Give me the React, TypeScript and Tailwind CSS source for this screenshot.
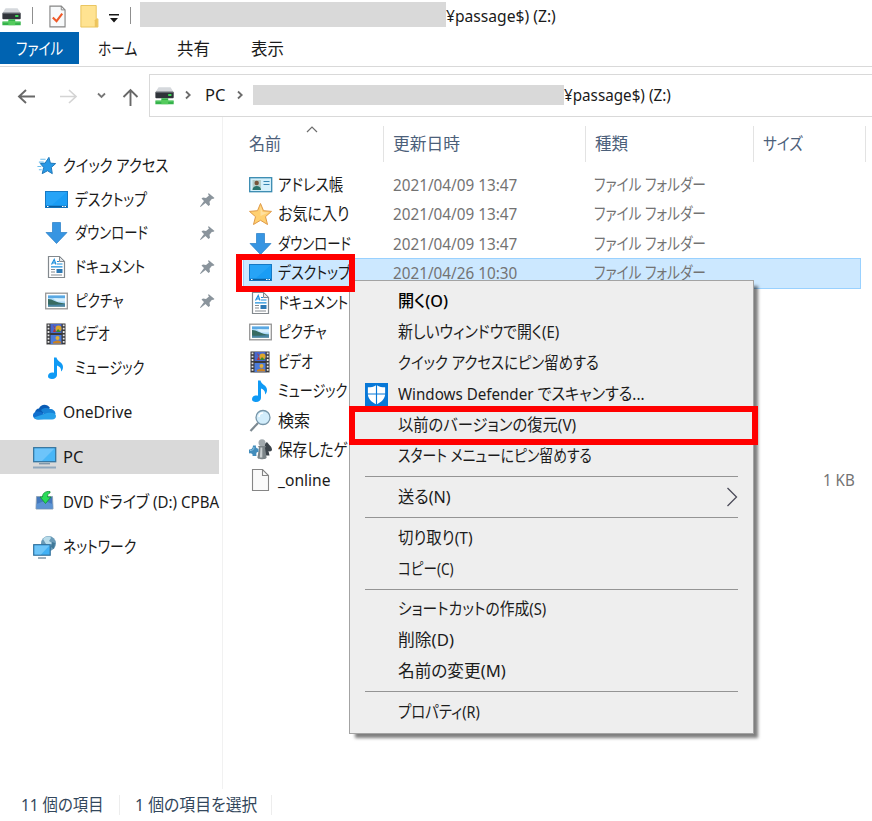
import { useLayoutEffect, useRef, useState } from "react";
import type { ReactNode } from "react";
import clsx from "clsx";

// Squeezes a label horizontally to the given width, like the narrow kana of a UI font
function Label({ text, width, className }: { text: string; width: number; className?: string }) {
  const ref = useRef<HTMLSpanElement>(null);
  const [scale, setScale] = useState(1);

  useLayoutEffect(() => {
    if (ref.current && ref.current.offsetWidth > 0) {
      setScale(width / ref.current.offsetWidth);
    }
  }, [text, width]);

  return (
    <span className={clsx("block shrink-0 whitespace-nowrap", className)} style={{ width }}>
      <span ref={ref} className="inline-block origin-left" style={{ transform: `scaleX(${scale})` }}>
        {text}
      </span>
    </span>
  );
}

function Svg({ children, className = "size-6" }: { children: ReactNode; className?: string }) {
  return (
    <svg viewBox="0 0 24 24" fill="none" className={clsx("shrink-0", className)}>
      {children}
    </svg>
  );
}

function DriveIcon({ className }: { className?: string }) {
  return (
    <Svg className={className}>
      <path d="M5 3.500h13l3.500 5.500h-20z" fill="#d5d8dc" />
      <rect x="1.500" y="8.500" width="20" height="7" rx="1" fill="#30343a" />
      <path d="M2 9h19" stroke="#70757c" />
      <rect x="15.500" y="11" width="3.500" height="2" fill="#3ee85a" />
      <path d="M8 15.500h7.500v2.500h6v4h-20v-4H8z" fill="#35b34a" />
      <path d="M2.500 18.500h18" stroke="#7bdd84" />
      <path d="M8 17.500h7.500V22H8z" fill="#54cb5c" />
    </Svg>
  );
}

function DesktopIcon() {
  return (
    <Svg>
      <rect x="0.500" y="3.500" width="22" height="16" fill="#1a9df5" stroke="#1679c4" />
      <path d="M1 4h21L7 17H1z" fill="#3db0fb" opacity="0.4" />
      <path d="M1 18.500h21" stroke="#0c5c9c" strokeWidth="1.500" />
      <path d="M2 18.500h1.500M17 18.500h1.500M19.500 18.500H21" stroke="#fff" strokeWidth="1.200" />
    </Svg>
  );
}

function DownloadIcon() {
  return (
    <Svg>
      <path d="M7.500 1.500h8v10h6.500L11.500 22.500 1 11.500h6.500z" fill="#3795e2" stroke="#257cc6" strokeWidth="0.7" />
    </Svg>
  );
}

function DocumentIcon() {
  return (
    <Svg>
      <path d="M3.500 1.500h11l5 5v16h-16z" fill="#fff" stroke="#83898e" strokeWidth="1.200" />
      <path d="M14.500 1.500v5h5z" fill="#e4e7ea" stroke="#83898e" />
      <path d="M6.500 9.500l2.700-5 1.800 5M7.500 8h3M12 6.500h2M12 9h5.500M6 11.800h11.500" stroke="#1d8fdc" strokeWidth="1.200" />
      <path d="M6 14.500h4M6 17h4M6 20h11" stroke="#858b91" />
      <rect x="11.500" y="14" width="6" height="4" fill="#2c79b5" />
    </Svg>
  );
}

function PictureIcon() {
  return (
    <Svg>
      <rect x="0.700" y="4.200" width="21.600" height="15.600" fill="#fff" stroke="#969696" strokeWidth="1.300" />
      <rect x="3" y="6.500" width="17" height="11" fill="#a9d9f8" />
      <path d="M3 6.500h17v2.500H3z" fill="#5aa8e3" />
      <path d="M8 9.500c3-1 6 .5 12 0v3H12z" fill="#d9f0fc" />
      <path d="M3 10c5 0 7 3.500 17 4.500v3H3z" fill="#376b62" />
      <path d="M3 15.500c6 1 11-.5 17-.5v2.500H3z" fill="#4a86a6" />
    </Svg>
  );
}

function VideoIcon() {
  return (
    <Svg>
      <rect x="1.500" y="1.500" width="19" height="21" fill="#39393b" />
      <rect x="5.500" y="2" width="11" height="9" fill="#4868cd" />
      <rect x="5.500" y="13" width="11" height="9" fill="#4c7cda" />
      <path d="M8 3l2 2-2 5h3z" fill="#bf312a" />
      <circle cx="13.500" cy="6.500" r="3" fill="#dda62a" />
      <path d="M11 10l2-3 3 3z" fill="#39882f" />
      <circle cx="12.500" cy="16" r="2" fill="#dfad38" />
      <path d="M8 20c3-2 6-2 8 0v1.500H8z" fill="#c98122" />
      <path d="M3.500 2.500v20M18.700 2.500v20" stroke="#e7e7e7" strokeWidth="1.800" strokeDasharray="1.8 1.5" />
    </Svg>
  );
}

function MusicIcon() {
  return (
    <Svg>
      <path
        d="M9 1.500h2.500c.5 4 6.500 4.500 6.500 9.500 0 2-.8 3.500-2 4.500.5-3-1-5-4-6v9.500c0 2-2 4-5 4-2.500 0-4-1-4-2.800C3 17.500 5.500 16 9 16.700z"
        fill="#0f9af5"
      />
    </Svg>
  );
}

function QuickAccessIcon() {
  return (
    <Svg className="size-[23px]">
      <path
        d="M13.500 3.500l1.500 6 5.500.5-4.500 4 1 6.500-5-3-5.500 3 1.500-6.500-3.500-4 5-.5z"
        fill="#2999e6"
        stroke="#1f76b7"
        strokeWidth="1"
      />
      <path d="M4.500 5.500H10M3 8.500h5M1.500 13h4M3 16.500h3" stroke="#6dbdec" strokeWidth="1.100" />
    </Svg>
  );
}

function CloudIcon() {
  return (
    <Svg>
      <path d="M2 13c0-3 2-4.500 4-4.500C8 4 14 3.500 17 8l-8 6z" fill="#0a5cb5" />
      <path d="M8 10c3-3 7-2 9-1 3 0 5.500 2 5.500 5l-9 3z" fill="#1782d6" />
      <path d="M5 19.500c-6 0-7-7-1-8 3-.5 5 1 7 2l6 5z" fill="#1070ce" />
      <path d="M5 19.500c-2 0-3-.7-4-2L14 13c5-1 9 0 9 3 0 2-1.500 3.500-4 3.500z" fill="#28a1ea" />
    </Svg>
  );
}

function PcIcon() {
  return (
    <Svg>
      <rect x="0.700" y="2.700" width="22" height="14" fill="#48b6f7" stroke="#36759e" strokeWidth="1.300" />
      <path d="M1.500 3.500h20L9 16H1.500z" fill="#7ecbfb" opacity="0.7" />
      <path d="M6 18.700h11" stroke="#7e96a9" strokeWidth="1.400" />
      <path d="M0 22.500h23" stroke="#91a8bd" strokeWidth="2" />
    </Svg>
  );
}

function DvdIcon() {
  return (
    <Svg>
      <path d="M3.500 6.500h16l.5 12.500H3z" fill="#4478bd" stroke="#8fa5ba" />
      <path d="M3.500 14l8-3 8 3v4.500h-16z" fill="#5c93d3" />
      <path d="M17 1.500c-5-.5-7.500 2-7.500 5.500H7l5.500 6.500L18 7h-3.500c0-2.500 1-4 2.500-4z" fill="#29dd59" stroke="#148c35" strokeWidth="0.800" />
    </Svg>
  );
}

function NetworkIcon() {
  return (
    <Svg>
      <circle cx="15.500" cy="8.500" r="7.500" fill="#6a9bb8" />
      <path d="M10 4c3-3 7-3 8-1l-2 3 3 2-2 4-4-3z" fill="#b9dcea" />
      <path d="M19 7l3 1-1 6-3-2z" fill="#3f7898" />
      <rect x="0.700" y="9.700" width="16.500" height="10.500" fill="#42b1f5" stroke="#32719c" strokeWidth="1.200" />
      <path d="M1.500 10.500h15L8 19.500H1.500z" fill="#82cdfa" opacity="0.7" />
      <path d="M5 23h8" stroke="#8097a8" strokeWidth="1.500" />
    </Svg>
  );
}

function ContactIcon() {
  return (
    <Svg>
      <rect x="0.700" y="4.700" width="22" height="14" fill="#d5f0fb" stroke="#3789b0" strokeWidth="1.300" />
      <rect x="3.500" y="7" width="8.500" height="10" fill="#b4cdca" />
      <circle cx="7.700" cy="10" r="2.200" fill="#775439" />
      <path d="M3.500 17c0-5.500 8.500-5.500 8.500 0z" fill="#28736c" />
      <path d="M14.500 8.500h6M14.500 11.500h6" stroke="#3785b2" strokeWidth="1.200" />
    </Svg>
  );
}

function StarIcon() {
  return (
    <Svg>
      <path
        d="M11.500 1.500l3 7.200 8 .7-6 5.300 2 7.800-7-4.200-7 4.200 2-7.800-6-5.300 8-.7z"
        fill="#ffd071"
        stroke="#df9a48"
        strokeWidth="1"
        strokeLinejoin="round"
      />
      <path d="M11.500 4l2 6 6 .5-8 3.500z" fill="#ffe0a0" />
    </Svg>
  );
}

function SearchIcon() {
  return (
    <Svg>
      <path d="M9 14l-7.500 8" stroke="#7d8991" strokeWidth="2.200" />
      <circle cx="14" cy="8.500" r="7" fill="#d2edfb" stroke="#7796a9" strokeWidth="1.300" />
      <path d="M10 8c0-3 2-4 4-4" stroke="#fff" strokeWidth="1.500" />
    </Svg>
  );
}

function GamesIcon() {
  return (
    <Svg>
      <path d="M18 4c1 2 5 4.500 5 7.500 0 2-2.500 2.500-3.500 1.500l1 4.500h-5V6z" fill="#3c444b" />
      <circle cx="13" cy="4.800" r="3.500" fill="#a2aaae" />
      <path d="M9 8h8l-1 2 1.500 9c1.500 3-10.500 3-9 0L10 10z" fill="#7c8589" />
      <path d="M11.500 9.500h1.800v10h-2.500z" fill="#c8ced0" />
      <path d="M4 7.500h3c-.5 2 .5 3 2.500 3v3.500c-2-.5-2.500 1-2 4H3.500c.5-2-1-3-3.500-2.500v-4c2 .5 4-1 4-4z" fill="#438dbc" />
      <path d="M1 12.500c2 0 4-.5 4-3.500" stroke="#8ec5e2" />
    </Svg>
  );
}

function FileIcon() {
  return (
    <Svg>
      <path d="M3.500 1.500h10l6 6v15h-16z" fill="#fafafa" stroke="#858585" strokeWidth="1.100" />
      <path d="M13.500 1.500v6h6" stroke="#858585" strokeWidth="1.100" />
    </Svg>
  );
}

function PinIcon() {
  return (
    <svg viewBox="0 0 16 16" className="size-4 shrink-0">
      <path d="M9.500 1l6 5-1.500 1-1-.3-2.500 3 .5 3-1.500 1.300L6.500 11l-5 4-.5-.5 4-5.500-2.500-2.500L4 5.500l3 .5 3-2.500-.8-1z" fill="#8a949c" />
    </svg>
  );
}

function DefenderIcon() {
  return (
    <Svg className="size-[23px]">
      <rect width="24" height="24" fill="#0878d7" />
      <path d="M12 2c3 2 6 2.500 9 2.500v7c0 5-4 8.500-9 11-5-2.500-9-6-9-11v-7C6 4.500 9 4 12 2z" fill="#fff" />
      <path d="M12 2v21M2 11.500h20" stroke="#0878d7" strokeWidth="1.200" />
    </Svg>
  );
}

const quickItems = [
  { text: "デスクトップ", width: 72, icon: <DesktopIcon />, pinned: true },
  { text: "ダウンロード", width: 73, icon: <DownloadIcon />, pinned: true },
  { text: "ドキュメント", width: 70, icon: <DocumentIcon />, pinned: true },
  { text: "ピクチャ", width: 49, icon: <PictureIcon />, pinned: true },
  { text: "ビデオ", width: 35, icon: <VideoIcon />, pinned: false },
  { text: "ミュージック", width: 69, icon: <MusicIcon />, pinned: false },
];

const rootItems = [
  { text: "OneDrive", width: 69, icon: <CloudIcon />, selected: false },
  { text: "PC", width: 20, icon: <PcIcon />, selected: true },
  { text: "DVD ドライブ (D:) CPBA", width: 156, icon: <DvdIcon />, selected: false },
  { text: "ネットワーク", width: 73, icon: <NetworkIcon />, selected: false },
];

const files = [
  { text: "アドレス帳", width: 65, icon: <ContactIcon />, date: "2021/04/09 13:47" },
  { text: "お気に入り", width: 71, icon: <StarIcon />, date: "2021/04/09 13:47" },
  { text: "ダウンロード", width: 73, icon: <DownloadIcon />, date: "2021/04/09 13:47" },
  { text: "デスクトップ", width: 73, icon: <DesktopIcon />, date: "2021/04/26 10:30", selected: true },
  { text: "ドキュメント", width: 70, icon: <DocumentIcon /> },
  { text: "ピクチャ", width: 49, icon: <PictureIcon /> },
  { text: "ビデオ", width: 35, icon: <VideoIcon /> },
  { text: "ミュージック", width: 69, icon: <MusicIcon /> },
  { text: "検索", width: 32, icon: <SearchIcon /> },
  { text: "保存したゲ", width: 70, icon: <GamesIcon /> },
  { text: "_online", width: 53, icon: <FileIcon />, size: "1 KB" },
];

const menuGroups = [
  [
    { text: "開く(O)", width: 50, bold: true },
    { text: "新しいウィンドウで開く(E)", width: 161 },
    { text: "クイック アクセスにピン留めする", width: 201 },
    { text: "Windows Defender でスキャンする...", width: 247, icon: <DefenderIcon /> },
    { text: "以前のバージョンの復元(V)", width: 178 },
    { text: "スタート メニューにピン留めする", width: 194 },
  ],
  [{ text: "送る(N)", width: 53, submenu: true }],
  [
    { text: "切り取り(T)", width: 75 },
    { text: "コピー(C)", width: 56 },
  ],
  [
    { text: "ショートカットの作成(S)", width: 148 },
    { text: "削除(D)", width: 56 },
    { text: "名前の変更(M)", width: 108 },
  ],
  [{ text: "プロパティ(R)", width: 82 }],
] as { text: string; width: number; bold?: boolean; icon?: ReactNode; submenu?: boolean }[][];

function TitleBar() {
  return (
    <header className="flex h-8 items-start">
      <DriveIcon className="ml-px mt-[5px] size-[22px]" />
      <div className="ml-[9px] mt-[7px] h-[17px] w-px bg-[#8f8f8f]" />
      <svg viewBox="0 0 18 24" className="ml-4 mt-[5px] h-[23px] w-[17px]" fill="none">
        <path d="M1 1h12l4 4v18H1z" fill="#f8fafb" stroke="#858585" strokeWidth="1.200" />
        <path d="M13 1v4h4" stroke="#858585" />
        <path d="M4 13l4 4 6-8" stroke="#ef5928" strokeWidth="2.200" />
      </svg>
      <svg viewBox="0 0 19 24" className="ml-3.5 mt-[5px] h-[23px] w-[19px]">
        <path d="M.5.500h16v14h1.800v8.500H.5z" fill="#ffe391" stroke="#e9c35b" />
        <path d="M15 23v-7l1-1.500h2V23z" fill="#edc45d" />
      </svg>
      <svg viewBox="0 0 10 9" className="ml-2.5 mt-3.5 h-[9px] w-2.5">
        <path d="M0 0h10v1.500H0zM1 4h8L5 8.500z" fill="#171717" />
      </svg>
      <div className="ml-[11px] mt-[7px] h-[17px] w-px bg-[#8f8f8f]" />
      <div className="ml-[9px] mt-0.5 h-[25px] w-[306px] bg-[#d9d9d9]" />
      <Label text="¥passage$) (Z:)" width={110} className="mt-1" />
    </header>
  );
}

function RibbonTabs() {
  return (
    <nav className="flex h-[35px] items-start border-b border-[#d9d9d9] leading-[33px]">
      <div className="flex h-8 w-[79px] bg-[#0063b1] pl-4 text-white">
        <Label text="ファイル" width={47} />
      </div>
      <Label text="ホーム" width={39} className="ml-[19px]" />
      <Label text="共有" width={33} className="ml-10" />
      <Label text="表示" width={33} className="ml-[41px]" />
    </nav>
  );
}

function AddressBar() {
  return (
    <div className="mt-[7px] flex h-[43px] items-center">
      <svg viewBox="0 0 149 42" className="h-[42px] w-[149px] shrink-0" fill="none">
        <path d="M35 21.500H19M26 15l-7 6.500 7 6.500" stroke="#686868" strokeWidth="1.900" />
        <path d="M60 21.500h16M69 15l7 6.500-7 6.500" stroke="#d4d4d4" strokeWidth="1.700" />
        <path d="M98 18.500l3.500 3.500 3.500-3.500" stroke="#777" strokeWidth="1.800" />
        <path d="M130.500 31V15M123.500 22l7-7 7 7" stroke="#686868" strokeWidth="1.900" />
      </svg>
      <div className="flex h-[43px] flex-1 items-center border-y border-l border-[#d9d9d9] pb-px">
        <DriveIcon className="ml-1 size-[22px]" />
        <Chevron className="ml-[9px]" />
        <Label text="PC" width={20} className="ml-3.5" />
        <Chevron className="ml-3" />
        <div className="ml-2.5 h-5 w-[311px] bg-[#d9d9d9]" />
        <Label text="¥passage$) (Z:)" width={107} />
      </div>
    </div>
  );
}

function Chevron({ className }: { className?: string }) {
  return (
    <svg viewBox="0 0 6 10" className={clsx("h-2.5 w-1.5 shrink-0", className)} fill="none">
      <path d="M1 1.500L4.700 5 1 8.500" stroke="#6b6b6b" strokeWidth="1.800" />
    </svg>
  );
}

function Sidebar() {
  return (
    <aside className="w-[223px] shrink-0 border-r border-[#f1f1f1] pt-8">
      <div className="flex h-[33.700px] items-center pl-9">
        <QuickAccessIcon />
        <Label text="クイック アクセス" width={105} className="ml-1" />
      </div>
      {quickItems.map((item) => (
        <div key={item.text} className="flex h-[33.700px] items-center pl-[45px] pr-[7px]">
          {item.icon}
          <Label text={item.text} width={item.width} className="ml-1.5" />
          {item.pinned && (
            <div className="ml-auto">
              <PinIcon />
            </div>
          )}
        </div>
      ))}
      <div className="mt-[5px] flex w-[219px] flex-col">
        {rootItems.map((item) => (
          <div key={item.text} className="flex h-[45px] items-center">
            <div className={clsx("flex h-[34px] w-full items-center pl-[33px]", item.selected && "bg-[#d9d9d9]")}>
              {item.icon}
              <Label text={item.text} width={item.width} className="ml-1.5" />
            </div>
          </div>
        ))}
      </div>
    </aside>
  );
}

function FileList() {
  return (
    <section className="min-w-0 flex-1 pt-[9px]">
      <div className="relative flex h-9 items-center text-[#4c607a]">
        <svg viewBox="0 0 12 7" className="absolute left-[83px] top-0 h-[7px] w-3" fill="none">
          <path d="M1 6l5-5 5 5" stroke="#6d6d6d" strokeWidth="1.200" />
        </svg>
        <div className="flex h-full w-[161px] items-center border-r border-[#e3e3e3] pl-[26px]">
          <Label text="名前" width={32} />
        </div>
        <div className="flex h-full w-[202px] items-center border-r border-[#e3e3e3] pl-[9px]">
          <Label text="更新日時" width={67} />
        </div>
        <div className="flex h-full w-[168px] items-center border-r border-[#e3e3e3] pl-[9px]">
          <Label text="種類" width={33} />
        </div>
        <div className="flex h-full w-[112px] items-center border-r border-[#e3e3e3] pl-[9px]">
          <Label text="サイズ" width={40} />
        </div>
      </div>
      <div className="mt-2 flex flex-col pl-5">
        {files.map((file) => (
          <div
            key={file.text}
            className={clsx(
              "flex w-[618px] items-center border pl-[5px]",
              file.selected ? "-my-[0.750px] h-[31px] border-[#99d1ff] bg-[#cce8ff]" : "h-[29.500px] border-transparent"
            )}
          >
            {file.icon}
            <Label text={file.text} width={file.width} className="ml-[5px]" />
            {file.date && (
              <div className="ml-auto flex w-[467px] text-[#737373]">
                <Label text={file.date} width={124} />
                <Label text="ファイル フォルダー" width={112} className="ml-[77px]" />
              </div>
            )}
            {file.size && <Label text={file.size} width={32} className="ml-auto mr-[5px] text-[#737373]" />}
          </div>
        ))}
      </div>
    </section>
  );
}

function ContextMenu() {
  return (
    <div className="absolute left-[349px] top-[280px] h-[454px] w-[405px] border border-[#a3a3a3] bg-[#eeeeee] pt-[5px] text-[#1c1c1c] shadow-[5px_5px_3px_-1px_rgba(0,0,0,0.5)]">
      {menuGroups.map((group, i) => (
        <div key={i}>
          {i > 0 && (
            <div className="flex h-2.5 items-center px-[15px]">
              <div className="h-px w-full bg-[#949494]" />
            </div>
          )}
          {group.map((item) => (
            <div key={item.text} className="flex h-[30.900px] items-center pl-[15px]">
              <div className="w-[33px]">{item.icon}</div>
              <Label text={item.text} width={item.width} className={item.bold ? "font-medium text-black" : ""} />
              {item.submenu && (
                <svg viewBox="0 0 12 20" className="ml-auto mr-[15px] h-5 w-3" fill="none">
                  <path d="M1.500 1l9 9-9 9" stroke="#4b4b59" strokeWidth="1.300" />
                </svg>
              )}
            </div>
          ))}
        </div>
      ))}
    </div>
  );
}

export default function App() {
  return (
    <main className="relative flex h-[821px] w-[872px] flex-col overflow-hidden bg-white font-['Noto_Sans','Noto_Sans_CJK_JP',sans-serif] text-[16.500px] leading-6 text-[#1a1a1a] [font-feature-settings:'palt']">
      <TitleBar />
      <RibbonTabs />
      <AddressBar />
      <div className="flex h-[672px]">
        <Sidebar />
        <FileList />
      </div>
      <footer className="flex h-8 items-center text-[#33475c]">
        <Label text="11 個の項目" width={83} className="ml-[21px]" />
        <div className="ml-[15px] h-5 w-px bg-[#ededed]" />
        <Label text="1 個の項目を選択" width={122} className="ml-[15px]" />
        <div className="ml-3.5 h-5 w-px bg-[#ededed]" />
      </footer>
      <ContextMenu />
      {/* Highlight frames */}
      <div className="absolute left-[236px] top-[254px] h-[38px] w-[119px] border-[6px] border-[#ff0000]" />
      <div className="absolute left-[349px] top-[406px] h-[39px] w-[409px] border-[6px] border-[#ff0000]" />
    </main>
  );
}
